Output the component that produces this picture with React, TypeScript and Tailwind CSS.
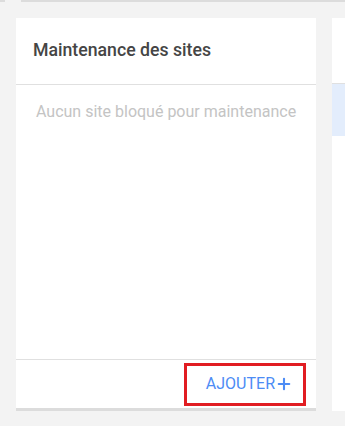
import { Plus } from 'lucide-react'

export default function App() {
  return (
    <div className="flex h-[426px] w-[345px] flex-col overflow-hidden bg-[#f3f3f3] font-['Roboto',sans-serif]">
      <div className="flex h-[2px] gap-[16px]">
        <div className="w-[5px] bg-[#dcdcdc]" />
        <div className="flex-1 bg-[#dcdcdc]" />
      </div>

      <div className="flex gap-[16px] pl-[16px] pt-[16px]">
        <MaintenanceCard />

        <div className="flex h-[393px] w-[300px] shrink-0 flex-col bg-white">
          <div className="h-[66px] border-b border-[#e0e0e0]" />
          <div className="h-[52px] bg-[#e3edfc]" />
        </div>
      </div>
    </div>
  )
}

function MaintenanceCard() {
  return (
    <div className="flex h-[393px] w-[300px] shrink-0 flex-col border-b-[3px] border-[#dcdcdc] bg-white">
      <div className="flex h-[67px] items-center border-b border-[#e0e0e0] px-[17px] pb-[1px]">
        <h2 className="text-[17.7px] font-medium text-[#454545]">Maintenance des sites</h2>
      </div>

      <div className="flex-1 pl-[20px] pt-[15px]">
        <p className="whitespace-nowrap text-[16px] text-[#c4c4c4]">Aucun site bloqué pour maintenance</p>
      </div>

      <div className="flex h-[49px] items-center justify-end border-t border-[#e0e0e0] pr-[10px]">
        <button className="flex h-[43px] items-center border-[3px] border-[#e11d22] pl-[19px] pr-[10px] text-[16px] uppercase text-[#4d8cf5]">
          Ajouter
          <Plus size={18} strokeWidth={2.8} />
        </button>
      </div>
    </div>
  )
}
